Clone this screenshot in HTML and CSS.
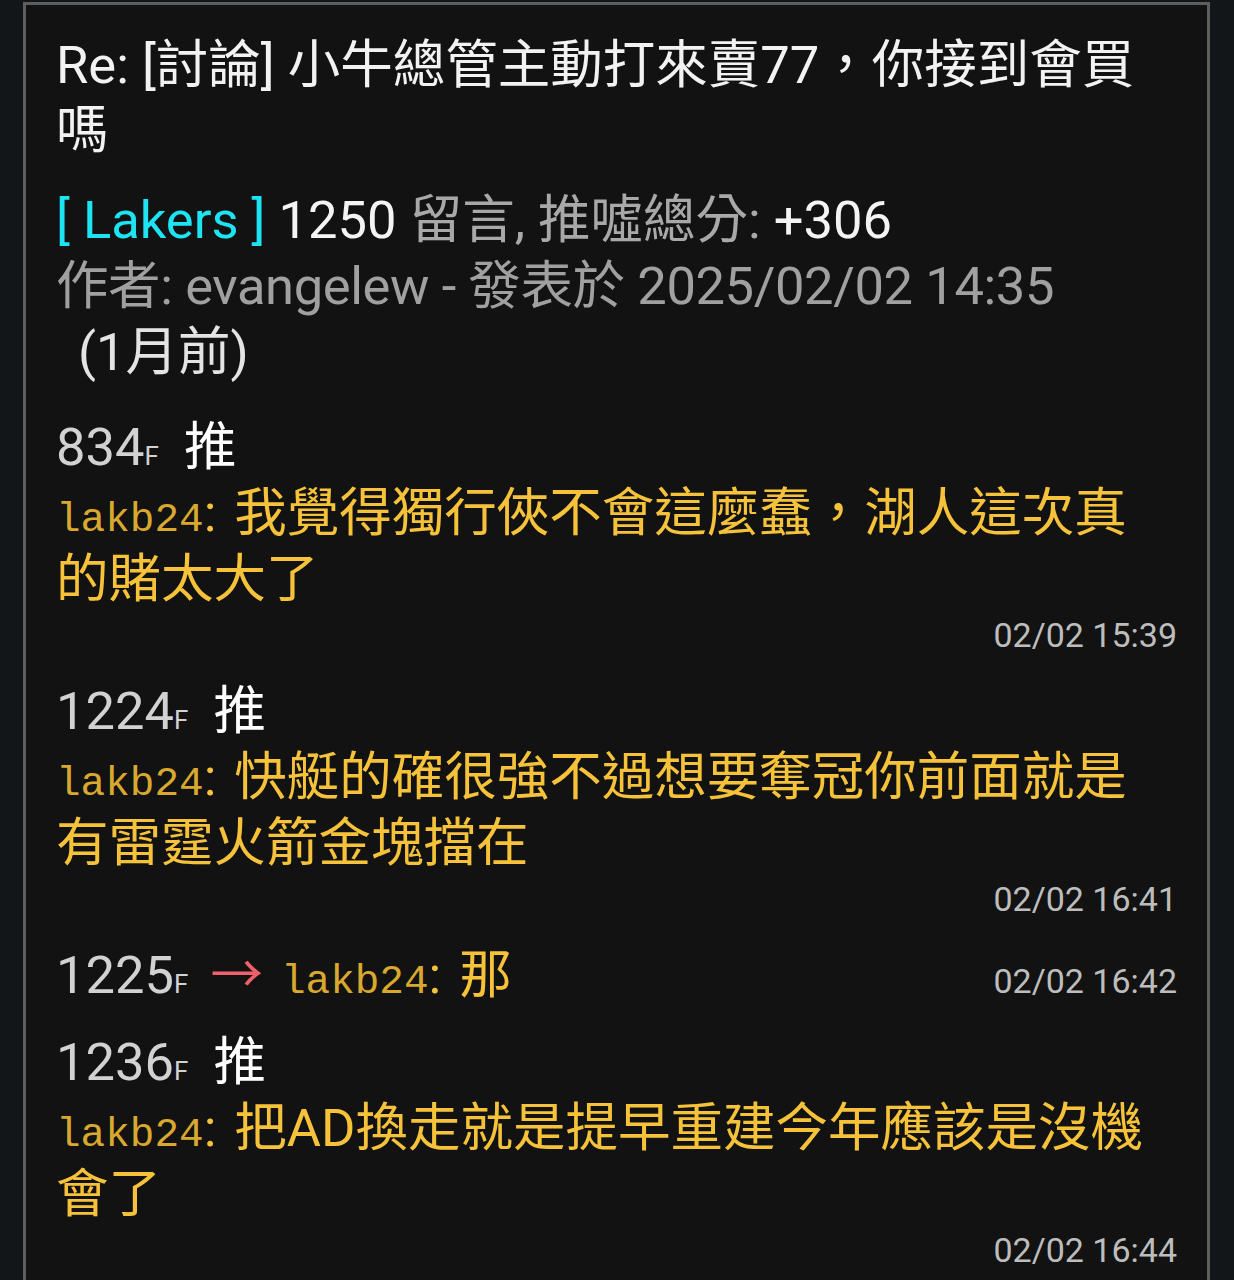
FILE: index.html
```html
<!DOCTYPE html>
<html lang="zh-Hant">
<head>
<meta charset="utf-8">
<title>Re: [討論] 小牛總管主動打來賣77，你接到會買嗎</title>
<link rel="stylesheet" href="styles.css">
</head>
<body>
<div class="card">
  <h1 class="title">Re: [討論] 小牛總管主動打來賣77，你接到會買嗎</h1>
  <div class="meta">
    <div class="stats"><span class="board">[ Lakers ]</span> <span class="hl">1250</span> 留言, 推噓總分: <span class="hl">+306</span></div>
    <div class="author">作者: evangelew - 發表於 2025/02/02 14:35 <span class="ago">(1月前)</span></div>
  </div>

  <div class="comment">
    <div class="floor"><span class="num">834</span><span class="f">F</span><span class="push">推</span></div>
    <div class="body"><span class="user">lakb24</span><span class="colon">:</span>我覺得獨行俠不會這麼蠢，湖人這次真的賭太大了</div>
    <div class="time">02/02 15:39</div>
  </div>

  <div class="comment">
    <div class="floor"><span class="num">1224</span><span class="f">F</span><span class="push">推</span></div>
    <div class="body"><span class="user">lakb24</span><span class="colon">:</span>快艇的確很強不過想要奪冠你前面就是有雷霆火箭金塊擋在</div>
    <div class="time">02/02 16:41</div>
  </div>

  <div class="comment reply">
    <div class="reply-main"><span class="num">1225</span><span class="f">F</span><span class="arrow">→</span><span class="body-inline"><span class="user">lakb24</span><span class="colon">:</span>那</span></div>
    <div class="time-inline">02/02 16:42</div>
  </div>

  <div class="comment">
    <div class="floor"><span class="num">1236</span><span class="f">F</span><span class="push">推</span></div>
    <div class="body"><span class="user">lakb24</span><span class="colon">:</span>把AD換走就是提早重建今年應該是沒機會了</div>
    <div class="time">02/02 16:44</div>
  </div>
</div>
</body>
</html>
```

FILE: styles.css
```css
html, body {
  margin: 0;
  padding: 0;
  background: #121619;
}

body {
  font-family: "Roboto", "Noto Sans CJK TC", sans-serif;
  font-size: 52.5px;
  line-height: 66px;
  color: #f0f0f0;
}

.card {
  margin: 2px 24px 0 23px;
  border: 3px solid #5e5e5e;
  border-bottom: none;
  background: #121212;
  padding: 28px 30px 40px 30px;
  min-height: 1300px;
}

.title {
  margin: 0;
  font-size: 52.5px;
  font-weight: 400;
  line-height: 65px;
  color: #f2f2f2;
}

.meta {
  margin-top: 24px;
}

.stats {
  color: #a8a8a8;
}

.board {
  color: #1ee3f2;
}

.hl {
  color: #f4f4f4;
}

.author {
  color: #a0a0a0;
  letter-spacing: -0.4px;
}

.ago {
  display: inline-block;
  margin-left: 22px;
  color: #e4e4e4;
  letter-spacing: 0;
}

.comment {
  margin-top: 20px;
}

.meta + .comment {
  margin-top: 29px;
}

.reply + .comment {
  margin-top: 15px;
}

.num {
  color: #d2d2d2;
}

.f {
  font-size: 26px;
  line-height: 1;
  color: #d2d2d2;
}

.push {
  margin-left: 25px;
  color: #ffffff;
}

.body, .body-inline {
  color: #f5c23a;
}

.user {
  font-family: "Liberation Mono", "DejaVu Sans Mono", monospace;
  font-size: 41px;
  line-height: 1;
  color: #d9a82e;
}

.colon {
  margin-right: 18px;
}

.time {
  text-align: right;
  font-size: 34px;
  line-height: 46px;
  color: #bdbdbd;
}

.reply {
  display: flex;
  justify-content: space-between;
  align-items: baseline;
}

.arrow {
  margin: 0 18px 0 22px;
  color: #f0606a;
}

.time-inline {
  font-size: 34px;
  color: #bdbdbd;
}
```
